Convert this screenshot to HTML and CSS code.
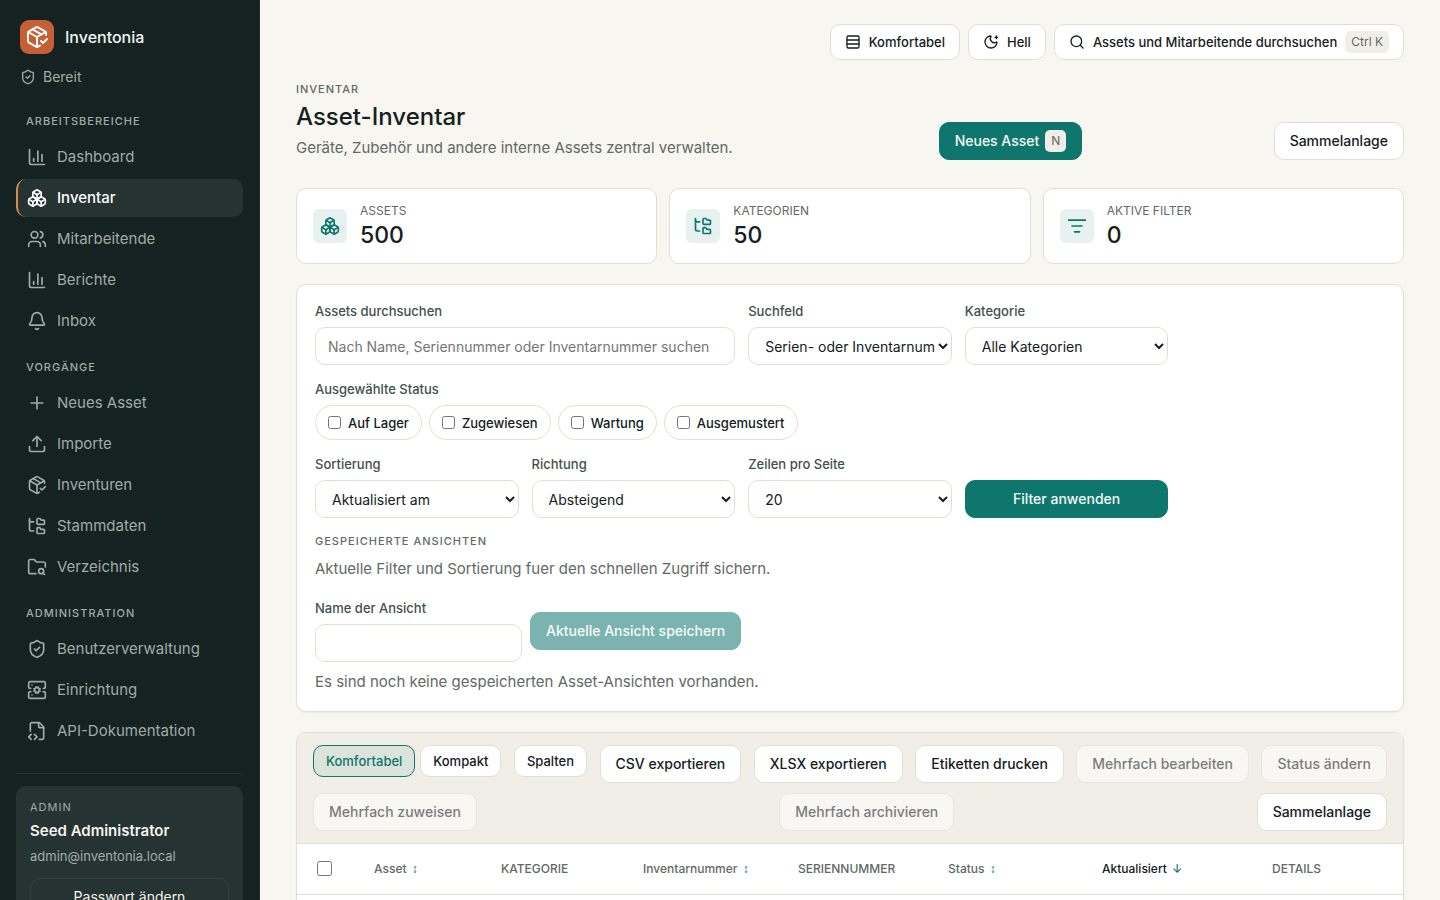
FILE: index.html
```html
<!DOCTYPE html>
<html lang="de">
<head>
    <meta charset="UTF-8">
    <meta name="viewport" content="width=device-width, initial-scale=1.0">
    <title>Asset-Inventar</title>
    <link rel="stylesheet" href="styles.css">
</head>
<body>
    <!-- Icon sprite -->
    <svg class="sprite" aria-hidden="true">
        <symbol id="package" viewBox="0 0 24 24"><path d="m16 16 2 2 4-4"/><path d="M21 10V8a2 2 0 0 0-1-1.73l-7-4a2 2 0 0 0-2 0l-7 4A2 2 0 0 0 3 8v8a2 2 0 0 0 1 1.73l7 4a2 2 0 0 0 2 0l2-1.14"/><path d="m7.5 4.27 9 5.15"/><path d="M3.29 7 12 12l8.71-5"/><path d="M12 22V12"/></symbol>
        <symbol id="shield" viewBox="0 0 24 24"><path d="M20 13c0 5-3.5 7.5-7.66 8.95a1 1 0 0 1-.67-.01C7.5 20.5 4 18 4 13V6a1 1 0 0 1 1-1c2 0 4.5-1.2 6.24-2.72a1.17 1.17 0 0 1 1.52 0C14.51 3.81 17 5 19 5a1 1 0 0 1 1 1z"/><path d="m9 12 2 2 4-4"/></symbol>
        <symbol id="chart" viewBox="0 0 24 24"><path d="M3 3v16a2 2 0 0 0 2 2h16"/><path d="M18 17V9"/><path d="M13 17V5"/><path d="M8 17v-3"/></symbol>
        <symbol id="boxes" viewBox="0 0 24 24"><path d="M2.97 12.92A2 2 0 0 0 2 14.63v3.24a2 2 0 0 0 .97 1.71l3 1.8a2 2 0 0 0 2.06 0L12 19v-5.5l-5-3-4.03 2.42Z"/><path d="m7 16.5-4.74-2.85"/><path d="m7 16.5 5-3"/><path d="M7 16.5v5.17"/><path d="M12 13.5V19l3.97 2.38a2 2 0 0 0 2.06 0l3-1.8a2 2 0 0 0 .97-1.71v-3.24a2 2 0 0 0-.97-1.71L17 10.5l-5 3Z"/><path d="m17 16.5-5-3"/><path d="m17 16.5 4.74-2.85"/><path d="M17 16.5v5.17"/><path d="M7.97 4.42A2 2 0 0 0 7 6.13v4.37l5 3 5-3V6.13a2 2 0 0 0-.97-1.71l-3-1.8a2 2 0 0 0-2.06 0l-3 1.8Z"/><path d="M12 8 7.26 5.15"/><path d="m12 8 4.74-2.85"/><path d="M12 13.5V8"/></symbol>
        <symbol id="users" viewBox="0 0 24 24"><path d="M16 21v-2a4 4 0 0 0-4-4H6a4 4 0 0 0-4 4v2"/><circle cx="9" cy="7" r="4"/><path d="M22 21v-2a4 4 0 0 0-3-3.87"/><path d="M16 3.128a4 4 0 0 1 0 7.744"/></symbol>
        <symbol id="bell" viewBox="0 0 24 24"><path d="M10.268 21a2 2 0 0 0 3.464 0"/><path d="M3.262 15.326A1 1 0 0 0 4 17h16a1 1 0 0 0 .74-1.673C19.41 13.956 18 12.499 18 8A6 6 0 0 0 6 8c0 4.499-1.411 5.956-2.738 7.326"/></symbol>
        <symbol id="plus" viewBox="0 0 24 24"><path d="M5 12h14"/><path d="M12 5v14"/></symbol>
        <symbol id="upload" viewBox="0 0 24 24"><path d="M12 3v12"/><path d="m17 8-5-5-5 5"/><path d="M21 15v4a2 2 0 0 1-2 2H5a2 2 0 0 1-2-2v-4"/></symbol>
        <symbol id="tree" viewBox="0 0 24 24"><path d="M20 10a1 1 0 0 0 1-1V6a1 1 0 0 0-1-1h-2.5a1 1 0 0 1-.8-.4l-.9-1.2A1 1 0 0 0 15 3h-2a1 1 0 0 0-1 1v5a1 1 0 0 0 1 1Z"/><path d="M20 21a1 1 0 0 0 1-1v-3a1 1 0 0 0-1-1h-2.9a1 1 0 0 1-.88-.55l-.42-.85a1 1 0 0 0-.92-.6H13a1 1 0 0 0-1 1v5a1 1 0 0 0 1 1Z"/><path d="M3 5a2 2 0 0 0 2 2h3"/><path d="M3 3v13a2 2 0 0 0 2 2h3"/></symbol>
        <symbol id="folder" viewBox="0 0 24 24"><path d="M10.7 20H4a2 2 0 0 1-2-2V5a2 2 0 0 1 2-2h3.9a2 2 0 0 1 1.69.9l.81 1.2a2 2 0 0 0 1.67.9H20a2 2 0 0 1 2 2v4.1"/><path d="m21 21-1.9-1.9"/><circle cx="17" cy="17" r="3"/></symbol>
        <symbol id="server" viewBox="0 0 24 24"><path d="m10.852 14.772-.383.923"/><path d="M13.148 14.772a3 3 0 1 0-2.296-5.544l-.383-.923"/><path d="m13.148 9.228.383-.923"/><path d="m13.53 15.696-.382-.924a3 3 0 1 1-2.296-5.544"/><path d="m14.772 10.852.923-.383"/><path d="m14.772 13.148.923.383"/><path d="M4.5 10H4a2 2 0 0 1-2-2V4a2 2 0 0 1 2-2h16a2 2 0 0 1 2 2v4a2 2 0 0 1-2 2h-.5"/><path d="M4.5 14H4a2 2 0 0 0-2 2v4a2 2 0 0 0 2 2h16a2 2 0 0 0 2-2v-4a2 2 0 0 0-2-2h-.5"/><path d="M6 18h.01"/><path d="M6 6h.01"/><path d="m9.228 10.852-.923-.383"/><path d="m9.228 13.148-.923.383"/></symbol>
        <symbol id="code" viewBox="0 0 24 24"><path d="M4 12.15V4a2 2 0 0 1 2-2h8a2.4 2.4 0 0 1 1.706.706l3.588 3.588A2.4 2.4 0 0 1 20 8v12a2 2 0 0 1-2 2h-3.35"/><path d="M14 2v5a1 1 0 0 0 1 1h5"/><path d="m5 16-3 3 3 3"/><path d="m9 22 3-3-3-3"/></symbol>
        <symbol id="rows" viewBox="0 0 24 24"><rect width="18" height="18" x="3" y="3" rx="2"/><path d="M21 9H3"/><path d="M21 15H3"/></symbol>
        <symbol id="moon" viewBox="0 0 24 24"><path d="M18 5h4"/><path d="M20 3v4"/><path d="M20.985 12.486a9 9 0 1 1-9.473-9.472c.405-.022.617.46.402.803a6 6 0 0 0 8.268 8.268c.344-.215.825-.004.803.401"/></symbol>
        <symbol id="search" viewBox="0 0 24 24"><path d="m21 21-4.34-4.34"/><circle cx="11" cy="11" r="8"/></symbol>
        <symbol id="filter" viewBox="0 0 24 24"><path d="M2 5h20"/><path d="M6 12h12"/><path d="M9 19h6"/></symbol>
    </svg>

    <div class="shell">
        <aside class="sidebar">
            <div class="brand">
                <span class="logo"><svg class="icon icon-lg"><use href="#package"/></svg></span>
                <span>Inventonia</span>
            </div>
            <div class="ready"><svg class="icon icon-sm"><use href="#shield"/></svg>Bereit</div>

            <nav>
                <h2 class="nav-label">Arbeitsbereiche</h2>
                <a class="nav-link" href="#"><svg class="icon"><use href="#chart"/></svg>Dashboard</a>
                <a class="nav-link active" href="#"><svg class="icon"><use href="#boxes"/></svg>Inventar</a>
                <a class="nav-link" href="#"><svg class="icon"><use href="#users"/></svg>Mitarbeitende</a>
                <a class="nav-link" href="#"><svg class="icon"><use href="#chart"/></svg>Berichte</a>
                <a class="nav-link" href="#"><svg class="icon"><use href="#bell"/></svg>Inbox</a>

                <h2 class="nav-label">Vorgänge</h2>
                <a class="nav-link" href="#"><svg class="icon"><use href="#plus"/></svg>Neues Asset</a>
                <a class="nav-link" href="#"><svg class="icon"><use href="#upload"/></svg>Importe</a>
                <a class="nav-link" href="#"><svg class="icon"><use href="#package"/></svg>Inventuren</a>
                <a class="nav-link" href="#"><svg class="icon"><use href="#tree"/></svg>Stammdaten</a>
                <a class="nav-link" href="#"><svg class="icon"><use href="#folder"/></svg>Verzeichnis</a>

                <h2 class="nav-label">Administration</h2>
                <a class="nav-link" href="#"><svg class="icon"><use href="#shield"/></svg>Benutzerverwaltung</a>
                <a class="nav-link" href="#"><svg class="icon"><use href="#server"/></svg>Einrichtung</a>
                <a class="nav-link" href="#"><svg class="icon"><use href="#code"/></svg>API-Dokumentation</a>
            </nav>

            <div class="account-wrap">
                <div class="account">
                    <span class="account-role">Admin</span>
                    <strong class="account-name">Seed Administrator</strong>
                    <span class="account-mail">admin@inventonia.local</span>
                    <button class="account-btn" type="button">Passwort ändern</button>
                </div>
            </div>
        </aside>

        <main class="main">
            <div class="topbar">
                <button class="btn btn-top" type="button"><svg class="icon icon-sm"><use href="#rows"/></svg>Komfortabel</button>
                <button class="btn btn-top" type="button"><svg class="icon icon-sm"><use href="#moon"/></svg>Hell</button>
                <button class="btn btn-top" type="button"><svg class="icon icon-sm"><use href="#search"/></svg>Assets und Mitarbeitende durchsuchen<kbd>Ctrl K</kbd></button>
            </div>

            <header class="page-head">
                <div>
                    <p class="eyebrow">Inventar</p>
                    <h1>Asset-Inventar</h1>
                    <p class="lead">Geräte, Zubehör und andere interne Assets zentral verwalten.</p>
                </div>
                <div class="head-actions">
                    <button class="btn btn-primary" type="button">Neues Asset<kbd>N</kbd></button>
                    <button class="btn" type="button">Sammelanlage</button>
                </div>
            </header>

            <section class="stats">
                <div class="stat">
                    <span class="stat-icon"><svg class="icon"><use href="#boxes"/></svg></span>
                    <div><p class="stat-label">Assets</p><p class="stat-value">500</p></div>
                </div>
                <div class="stat">
                    <span class="stat-icon"><svg class="icon"><use href="#tree"/></svg></span>
                    <div><p class="stat-label">Kategorien</p><p class="stat-value">50</p></div>
                </div>
                <div class="stat">
                    <span class="stat-icon"><svg class="icon"><use href="#filter"/></svg></span>
                    <div><p class="stat-label">Aktive Filter</p><p class="stat-value">0</p></div>
                </div>
            </section>

            <section class="card filters">
                <form class="filter-grid">
                    <div class="field field-wide">
                        <label for="q">Assets durchsuchen</label>
                        <input id="q" type="text" placeholder="Nach Name, Seriennummer oder Inventarnummer suchen">
                    </div>
                    <div class="field">
                        <label for="scope">Suchfeld</label>
                        <select id="scope"><option>Serien- oder Inventarnummer</option></select>
                    </div>
                    <div class="field">
                        <label for="category">Kategorie</label>
                        <select id="category"><option>Alle Kategorien</option></select>
                    </div>
                    <fieldset class="field field-full">
                        <legend>Ausgewählte Status</legend>
                        <div class="pills">
                            <label class="pill"><input type="checkbox">Auf Lager</label>
                            <label class="pill"><input type="checkbox">Zugewiesen</label>
                            <label class="pill"><input type="checkbox">Wartung</label>
                            <label class="pill"><input type="checkbox">Ausgemustert</label>
                        </div>
                    </fieldset>
                    <div class="field">
                        <label for="sort">Sortierung</label>
                        <select id="sort"><option>Aktualisiert am</option></select>
                    </div>
                    <div class="field">
                        <label for="dir">Richtung</label>
                        <select id="dir"><option>Absteigend</option></select>
                    </div>
                    <div class="field">
                        <label for="size">Zeilen pro Seite</label>
                        <select id="size"><option>20</option></select>
                    </div>
                    <button class="btn btn-primary" type="button">Filter anwenden</button>
                </form>

                <div class="saved">
                    <p class="eyebrow">Gespeicherte Ansichten</p>
                    <p class="lead">Aktuelle Filter und Sortierung fuer den schnellen Zugriff sichern.</p>
                    <form class="saved-form">
                        <div class="field">
                            <label for="view">Name der Ansicht</label>
                            <input id="view" type="text">
                        </div>
                        <button class="btn btn-primary" type="button" disabled>Aktuelle Ansicht speichern</button>
                    </form>
                    <p class="lead">Es sind noch keine gespeicherten Asset-Ansichten vorhanden.</p>
                </div>
            </section>

            <section class="card">
                <div class="toolbar">
                    <div class="density">
                        <button class="btn btn-small selected" type="button">Komfortabel</button>
                        <button class="btn btn-small" type="button">Kompakt</button>
                    </div>
                    <button class="btn btn-small" type="button">Spalten</button>
                    <button class="btn" type="button">CSV exportieren</button>
                    <button class="btn" type="button">XLSX exportieren</button>
                    <button class="btn" type="button">Etiketten drucken</button>
                    <button class="btn" type="button" disabled>Mehrfach bearbeiten</button>
                    <button class="btn" type="button" disabled>Status ändern</button>
                    <button class="btn" type="button" disabled>Mehrfach zuweisen</button>
                    <button class="btn" type="button" disabled>Mehrfach archivieren</button>
                    <button class="btn" type="button">Sammelanlage</button>
                </div>
                <table class="assets">
                    <thead>
                        <tr>
                            <th class="col-check"><input type="checkbox" aria-label="Alle auswählen"></th>
                            <th class="col-asset"><button class="sort" type="button">Asset <span>↕</span></button></th>
                            <th class="col-category">Kategorie</th>
                            <th class="col-number"><button class="sort" type="button">Inventarnummer <span>↕</span></button></th>
                            <th class="col-serial">Seriennummer</th>
                            <th class="col-status"><button class="sort" type="button">Status <span>↕</span></button></th>
                            <th class="col-updated"><button class="sort sorted" type="button">Aktualisiert <span>↓</span></button></th>
                            <th class="col-details">Details</th>
                        </tr>
                    </thead>
                    <tbody>
                        <tr><td colspan="8"></td></tr>
                    </tbody>
                </table>
            </section>
        </main>
    </div>
</body>
</html>
```

FILE: styles.css
```css
:root {
  --bg: #f7f6f1;
  --card: #fff;
  --line: #e2dfd1;
  --sand: #f1eee7;
  --text: #15201e;
  --muted: #5f6965;
  --green: #0f766e;
  --side: #142321;
  --side-text: #a1aaa7;
}

* {
  box-sizing: border-box;
}

body {
  margin: 0;
  background: var(--bg);
  color: var(--text);
  font-family: Inter, "Liberation Sans", sans-serif;
  font-size: 14px;
  line-height: 20px;
}

button,
input,
select {
  font: inherit;
  color: inherit;
}

h1,
h2,
p {
  margin: 0;
}

.sprite {
  position: absolute;
  width: 0;
  height: 0;
}

.icon {
  width: 20px;
  height: 20px;
  flex: none;
  fill: none;
  stroke: currentColor;
  stroke-width: 2;
  stroke-linecap: round;
  stroke-linejoin: round;
}

.icon-sm {
  width: 16px;
  height: 16px;
}

.icon-lg {
  width: 24px;
  height: 24px;
}

.shell {
  display: flex;
  height: 100vh;
}

/* Sidebar */
.sidebar {
  flex: 0 0 260px;
  padding: 20px 16px;
  border-right: 1px solid #202f2d;
  background: var(--side);
  color: var(--side-text);
  overflow-y: auto;
  scrollbar-width: none;
}

.brand {
  display: flex;
  align-items: center;
  gap: 11px;
  padding: 0 4px;
  color: #f4f3ee;
  font-size: 16px;
  font-weight: 500;
}

.logo {
  display: grid;
  place-items: center;
  width: 34px;
  height: 34px;
  border-radius: 9px;
  background: #c65f34;
  color: #fff;
}

.ready {
  display: flex;
  align-items: center;
  gap: 7px;
  margin: 13px 0 10px;
  padding: 0 4px;
}

.nav-label {
  padding: 16px 10px 9px;
  font-size: 11px;
  font-weight: 500;
  line-height: 16px;
  letter-spacing: 1px;
  text-transform: uppercase;
}

.nav-link {
  display: flex;
  align-items: center;
  gap: 10px;
  height: 38px;
  margin-bottom: 3px;
  padding: 0 9px;
  border-left: 2px solid transparent;
  border-radius: 10px;
  color: inherit;
  font-size: 15px;
  text-decoration: none;
}

.nav-link.active {
  border-left-color: #d98b4b;
  background: #253432;
  color: #fff;
  font-weight: 500;
}

.account-wrap {
  margin-top: 23px;
  padding-top: 12px;
  border-top: 1px solid #22302e;
}

.account {
  display: flex;
  flex-direction: column;
  padding: 12px 14px;
  border-radius: 10px;
  background: #253432;
}

.account-role {
  font-size: 11px;
  line-height: 18px;
  letter-spacing: 1px;
  text-transform: uppercase;
}

.account-name {
  color: #f4f3ee;
  font-size: 15px;
  font-weight: 600;
  line-height: 30px;
}

.account-mail {
  font-size: 13px;
}

.account-btn {
  height: 38px;
  margin-top: 12px;
  border: 1px solid #32403e;
  border-radius: 10px;
  background: transparent;
  color: #f4f3ee;
}

/* Main column */
.main {
  flex: 1;
  min-width: 0;
  padding: 24px 36px;
  overflow-y: auto;
  scrollbar-width: none;
}

.btn {
  display: inline-flex;
  align-items: center;
  justify-content: center;
  gap: 6px;
  height: 38px;
  padding: 0 15px;
  border: 1px solid var(--line);
  border-radius: 10px;
  background: var(--card);
  font-size: 14px;
  font-weight: 500;
  white-space: nowrap;
}

.btn-primary {
  border-color: var(--green);
  background: var(--green);
  color: #f4f8f5;
}

.btn:disabled {
  opacity: 0.55;
}

.btn-top {
  gap: 8px;
  height: 36px;
  padding: 0 14px;
  font-size: 13px;
}

.btn-small {
  height: 32px;
  padding: 0 12px;
  font-size: 13px;
}

.btn-small.selected {
  border-color: var(--green);
  background: #dbe3da;
  color: var(--green);
}

kbd {
  padding: 0 6px;
  border-radius: 5px;
  background: var(--sand);
  color: var(--muted);
  font-family: inherit;
  font-size: 12px;
  font-weight: 400;
  line-height: 22px;
}

.topbar {
  display: flex;
  justify-content: flex-end;
  gap: 8px;
}

.page-head {
  display: flex;
  align-items: flex-end;
  justify-content: space-between;
  margin-top: 21px;
}

.eyebrow {
  color: var(--muted);
  font-size: 11px;
  font-weight: 500;
  line-height: 16px;
  letter-spacing: 1px;
  text-transform: uppercase;
}

h1 {
  font-size: 24px;
  font-weight: 500;
  line-height: 39px;
}

.lead {
  color: var(--muted);
  font-size: 15px;
  line-height: 24px;
}

.head-actions {
  display: flex;
  flex: 0 0 42%;
  justify-content: space-between;
}

.stats {
  display: grid;
  grid-template-columns: repeat(3, 1fr);
  gap: 12px;
  margin-top: 28px;
}

.stat {
  display: flex;
  align-items: center;
  gap: 13px;
  padding: 12px 16px;
  border: 1px solid var(--line);
  border-radius: 10px;
  background: var(--card);
}

.stat-icon {
  display: grid;
  place-items: center;
  width: 34px;
  height: 34px;
  border-radius: 6px;
  background: #e7f1ef;
  color: var(--green);
}

.stat-label {
  color: var(--muted);
  font-size: 12px;
  text-transform: uppercase;
}

.stat-value {
  padding-bottom: 2px;
  font-size: 23px;
  font-weight: 500;
  line-height: 28px;
}

.card {
  margin-top: 20px;
  border: 1px solid var(--line);
  border-radius: 10px;
  background: var(--card);
  box-shadow: 0 1px 2px rgba(20, 35, 33, 0.05);
  overflow: hidden;
}

/* Filters */
.filters {
  padding: 18px 18px 17px;
}

.filter-grid {
  display: grid;
  grid-template-columns: repeat(5, 1fr);
  align-items: end;
  gap: 16px 13px;
}

.field {
  min-width: 0;
  margin: 0;
  padding: 0;
  border: 0;
}

.field-wide {
  grid-column: span 2;
}

.field-full {
  grid-column: 1 / -1;
}

.field > label,
legend {
  display: block;
  margin-bottom: 8px;
  padding: 0;
  color: #43504c;
  font-size: 13px;
  font-weight: 500;
  line-height: 16px;
}

.field > input,
.field > select {
  display: block;
  width: 100%;
  height: 38px;
  padding: 0 12px;
  border: 1px solid var(--line);
  border-radius: 10px;
  background: var(--card);
  outline: none;
}

.field > select {
  padding-right: 0;
}

.pills {
  display: flex;
  flex-wrap: wrap;
  gap: 7px;
}

.pill {
  display: flex;
  align-items: center;
  gap: 7px;
  height: 35px;
  padding: 0 12px;
  border: 1px solid var(--line);
  border-radius: 18px;
  font-size: 13px;
  font-weight: 500;
}

.pill input {
  margin: 0;
}

.saved {
  display: grid;
  gap: 8px;
  margin-top: 15px;
}

.saved-form {
  display: flex;
  align-items: center;
  gap: 8px;
  margin-top: 11px;
}

.saved-form .field {
  flex: 0 1 207px;
}

/* Table */
.toolbar {
  display: flex;
  flex-wrap: wrap;
  align-items: flex-start;
  justify-content: space-between;
  gap: 10px;
  padding: 12px 16px;
  border-bottom: 1px solid var(--line);
  background: var(--sand);
}

.density {
  display: flex;
  gap: 5px;
}

.assets {
  width: 100%;
  table-layout: fixed;
  border-collapse: collapse;
}

.assets th {
  height: 50px;
  padding: 0 16px;
  border-bottom: 1px solid var(--line);
  color: var(--muted);
  font-size: 12px;
  font-weight: 500;
  text-align: left;
  text-transform: uppercase;
  white-space: nowrap;
}

.assets .col-check { width: 61px; padding: 0 20px; }
.col-asset { width: 127px; }
.col-category { width: 142px; }
.col-number { width: 155px; }
.col-serial { width: 150px; }
.col-status { width: 154px; }
.col-updated { width: 170px; }
.col-details { width: 147px; }

.assets th input {
  display: block;
  width: 15px;
  height: 15px;
  margin: 0;
}

.sort {
  padding: 0;
  border: 0;
  background: none;
}

.sort span {
  margin-left: 2px;
  color: var(--green);
  font-family: "Liberation Sans", sans-serif;
}

.sort.sorted {
  color: var(--text);
}

.sort.sorted span {
  font-family: inherit;
}

.assets td {
  height: 56px;
}
```
